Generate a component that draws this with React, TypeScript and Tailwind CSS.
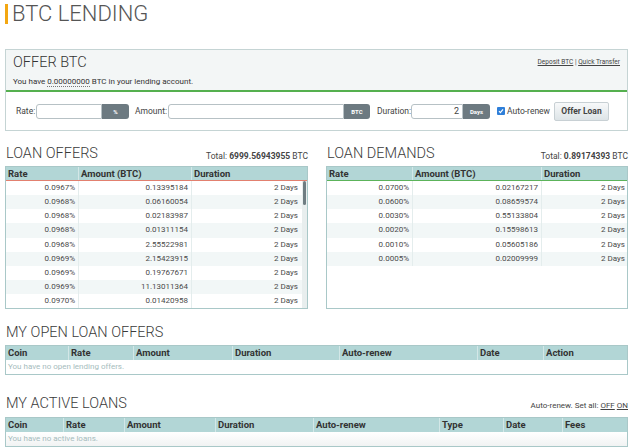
import React from "react";

const offers: [string, string][] = [
  ["0.0967%", "0.13395184"],
  ["0.0968%", "0.06160054"],
  ["0.0968%", "0.02183987"],
  ["0.0968%", "0.01311154"],
  ["0.0968%", "2.55522981"],
  ["0.0969%", "2.15423915"],
  ["0.0969%", "0.19767671"],
  ["0.0969%", "11.13011364"],
  ["0.0970%", "0.01420958"],
];

const demands: [string, string][] = [
  ["0.0700%", "0.02167217"],
  ["0.0600%", "0.08659574"],
  ["0.0030%", "0.55133804"],
  ["0.0020%", "0.15598613"],
  ["0.0010%", "0.05605186"],
  ["0.0005%", "0.02009999"],
];

function SectionTitle({ children, right }: { children: React.ReactNode; right?: React.ReactNode }) {
  return (
    <div className="flex h-[18px] items-end justify-between">
      <h2 className="pl-[1px] text-[14.5px] font-light leading-[17px] text-[#3a3a3a]">{children}</h2>
      {right ? <div className="text-[8.5px] leading-[12px] text-[#444]">{right}</div> : null}
    </div>
  );
}

function AddonInput({ width, addon, addonWidth, value }: { width: string; addon: string; addonWidth: string; value?: string }) {
  return (
    <div className="flex h-[15px]">
      <div className={`${width} h-[15px] rounded-l-[3px] border border-[#b7c1c5] bg-white pr-[3px] text-right text-[9px] leading-[13px] text-[#444]`}>
        {value}
      </div>
      <div className={`${addonWidth} h-[15px] rounded-r-[3px] bg-[#6d7a81] text-center text-[6px] font-bold leading-[15px] text-white`}>
        {addon}
      </div>
    </div>
  );
}

function OrderTable({
  rows,
  cols,
  headLine,
  scroll,
}: {
  rows: [string, string][];
  cols: [string, string];
  headLine: string;
  scroll?: boolean;
}) {
  return (
    <div className="h-[143px] border border-[#a9c8c8] bg-white">
      <div className={`flex h-[14px] border-b bg-[#b2d6d6] ${headLine} text-[9.5px] font-bold leading-[13px] text-[#333]`}>
        <div className={`${cols[0]} pl-[2px]`}>Rate</div>
        <div className={`${cols[1]} border-l border-[#d3e7e7] pl-[2px]`}>Amount (BTC)</div>
        <div className="flex-1 border-l border-[#d3e7e7] pl-[2px]">Duration</div>
      </div>
      <div className="relative h-[127px] overflow-hidden">
        {rows.map(([rate, amount], i) => (
          <div
            key={i}
            className={`flex h-[14.17px] text-[8px] leading-[14px] text-[#4a4a4a] ${i % 2 === 1 ? "bg-[#f2f7f7]" : "bg-white"}`}
          >
            <div className={`${cols[0]} pr-[3px] text-right`}>{rate}</div>
            <div className={`${cols[1]} border-l border-[#e4eded] pr-[3px] text-right`}>{amount}</div>
            <div className={`flex-1 border-l border-[#e4eded] text-right ${scroll ? "pr-[9px]" : "pr-[2px]"}`}>2 Days</div>
          </div>
        ))}
        {scroll ? (
          <div className="absolute right-0 top-0 h-full w-[5px] bg-[#e8eeee]">
            <div className="ml-[1px] h-[24px] w-[3px] rounded-[2px] bg-[#6f7d82]" />
          </div>
        ) : null}
      </div>
    </div>
  );
}

function EmptyTable({ cols, heads, text, rowBg }: { cols: string; heads: string[]; text: string; rowBg: string }) {
  return (
    <div className="border border-[#a9c8c8]">
      <div className={`grid ${cols} h-[14px] bg-[#b2d6d6] text-[9.5px] font-bold leading-[14px] text-[#333]`}>
        {heads.map((h, i) => (
          <div key={h} className={`pl-[2px] ${i > 0 ? "border-l border-[#d3e7e7]" : ""}`}>
            {h}
          </div>
        ))}
      </div>
      <div className={`h-[14px] pl-[2px] text-[8px] leading-[14px] text-[#a6bcbd] ${rowBg}`}>{text}</div>
    </div>
  );
}

export default function App() {
  return (
    <div className="h-[448px] w-[640px] overflow-hidden bg-white pl-[5px] font-['Roboto',sans-serif] text-[#333]">
      <div className="w-[623px]">
        <div className="mt-[4px] flex h-[20px] items-center">
          <div className="h-[20px] w-[3px] bg-[#f3a712]" />
          <h1 className="ml-[4px] text-[22px] font-light leading-[20px] text-[#555]">BTC LENDING</h1>
        </div>

        <div className="mt-[25px] border border-[#c5d4d4]">
          <div className="flex h-[42px] justify-between border-b-2 border-[#55b04f] bg-[#f3f6f6] px-[7px]">
            <div className="pt-[4px]">
              <div className="text-[14.5px] font-light leading-[18px] text-[#333]">OFFER BTC</div>
              <div className="mt-[4px] text-[8px] leading-[12px] text-[#333]">
                You have <span className="border-b border-dotted border-[#777]">0.00000000</span> BTC in your lending account.
              </div>
            </div>
            <div className="pt-[8px] text-[6.5px] text-[#444]">
              <span className="underline">Deposit BTC</span> | <span className="underline">Quick Transfer</span>
            </div>
          </div>
          <div className="flex h-[38px] items-center pl-[10px] text-[8.5px] text-[#444]">
            <span className="w-[20px]">Rate:</span>
            <AddonInput width="w-[66px]" addon="%" addonWidth="w-[27px]" />
            <span className="ml-[6px] w-[33px]">Amount:</span>
            <AddonInput width="w-[176px]" addon="BTC" addonWidth="w-[26px]" />
            <span className="ml-[7px] w-[34px]">Duration:</span>
            <AddonInput width="w-[52px]" addon="Days" addonWidth="w-[27px]" value="2" />
            <div className="ml-[7px] flex h-[8px] w-[8px] shrink-0 items-center justify-center rounded-[1px] bg-[#2f7fd9]">
              <svg width="6" height="6" viewBox="0 0 6 6">
                <path d="M1 3.2 L2.4 4.6 L5 1.4" fill="none" stroke="white" strokeWidth="1.2" />
              </svg>
            </div>
            <span className="ml-[2px] w-[44px] shrink-0 whitespace-nowrap text-[8.5px]">Auto-renew</span>
            <button
              type="button"
              className="ml-[3px] h-[19px] w-[55px] shrink-0 rounded-[2px] border border-[#c8d0d4] bg-gradient-to-b from-[#f8f9fa] to-[#dde4e7] text-[8.5px] font-bold text-[#444]"
            >
              Offer Loan
            </button>
          </div>
        </div>

        <div className="mt-[13px] flex gap-[18px]">
          <div className="w-[303px]">
            <SectionTitle
              right={
                <>
                  Total: <b>6999.56943955</b> BTC
                </>
              }
            >
              LOAN OFFERS
            </SectionTitle>
            <div className="mt-[4px]">
              <OrderTable rows={offers} cols={["w-[72px]", "w-[113px]"]} headLine="border-[#e2806f]" scroll />
            </div>
          </div>
          <div className="w-[302px]">
            <SectionTitle
              right={
                <>
                  Total: <b>0.89174393</b> BTC
                </>
              }
            >
              LOAN DEMANDS
            </SectionTitle>
            <div className="mt-[4px]">
              <OrderTable rows={demands} cols={["w-[85px]", "w-[129px]"]} headLine="border-[#5cb35a]" />
            </div>
          </div>
        </div>

        <div className="mt-[14px]">
          <SectionTitle>MY OPEN LOAN OFFERS</SectionTitle>
          <div className="mt-[4px]">
            <EmptyTable
              cols="grid-cols-[62px_65px_99px_107px_138px_66px_1fr]"
              heads={["Coin", "Rate", "Amount", "Duration", "Auto-renew", "Date", "Action"]}
              text="You have no open lending offers."
              rowBg="bg-white"
            />
          </div>
        </div>

        <div className="mt-[19px]">
          <SectionTitle
            right={
              <span className="text-[8px]">
                Auto-renew. Set all: <span className="underline">OFF</span> <span className="underline">ON</span>
              </span>
            }
          >
            MY ACTIVE LOANS
          </SectionTitle>
          <div className="mt-[5px]">
            <EmptyTable
              cols="grid-cols-[57px_61px_91px_98px_126px_64px_59px_1fr]"
              heads={["Coin", "Rate", "Amount", "Duration", "Auto-renew", "Type", "Date", "Fees"]}
              text="You have no active loans."
              rowBg="bg-gradient-to-b from-white to-[#f1f3f3]"
            />
          </div>
        </div>
      </div>
    </div>
  );
}
